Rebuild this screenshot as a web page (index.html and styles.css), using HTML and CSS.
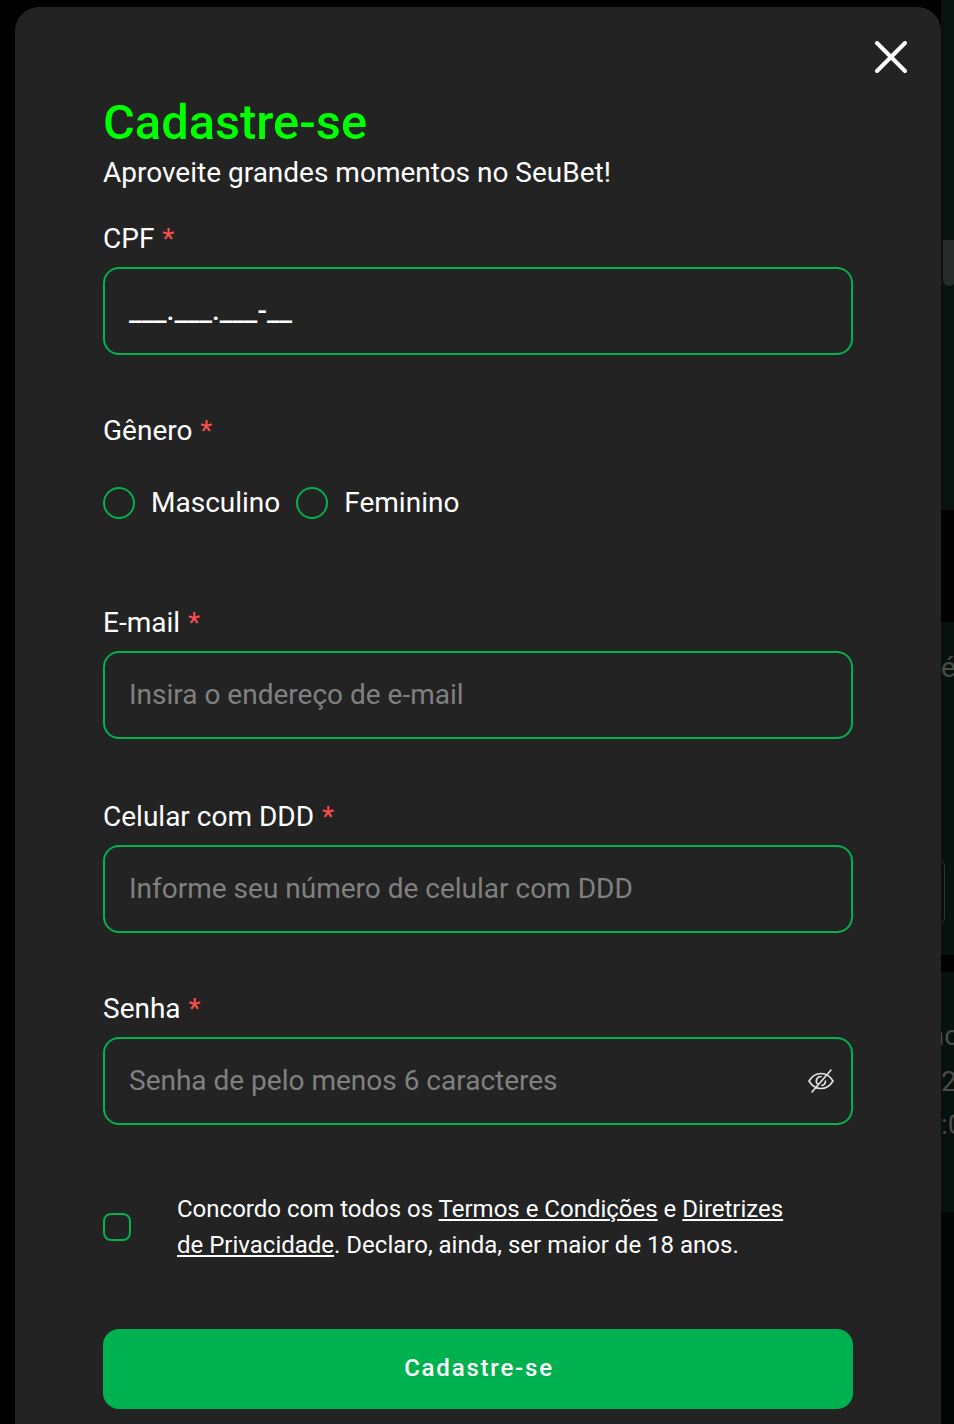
FILE: index.html
```html
<!DOCTYPE html>
<html lang="pt-BR">
  <head>
    <meta charset="UTF-8" />
    <meta name="viewport" content="width=device-width, initial-scale=1.0" />
    <title>Cadastre-se</title>
    <link rel="stylesheet" href="styles.css">
  </head>
  <body>
    <!-- Page behind the modal, only its right edge shows -->
    <div class="backdrop">
      <span class="bg-blob"></span>
      <span class="bg-text bg-text-1">é</span>
      <span class="bg-box"></span>
      <span class="bg-text bg-text-2">ác</span>
      <span class="bg-text bg-text-3">2</span>
      <span class="bg-text bg-text-4">:0</span>
    </div>

    <!-- Modal -->
    <div class="modal">
      <button class="close-btn" aria-label="Fechar">
        <svg width="32" height="32" viewBox="0 0 32 32">
          <path d="M2 2L30 30M30 2L2 30" stroke="#fff" stroke-width="4" stroke-linecap="round" fill="none" />
        </svg>
      </button>

      <h1 class="title">Cadastre-se</h1>
      <p class="subtitle">Aproveite grandes momentos no SeuBet!</p>

      <form class="form">
        <div class="field field-cpf">
          <label>CPF <span class="req">*</span></label>
          <div class="input-box"><span class="mask">___.___.___-__</span></div>
        </div>

        <div class="field field-gender">
          <label>Gênero <span class="req">*</span></label>
          <div class="radios">
            <div class="radio-item"><span class="radio"></span>Masculino</div>
            <div class="radio-item"><span class="radio"></span>Feminino</div>
          </div>
        </div>

        <div class="field field-email">
          <label>E-mail <span class="req">*</span></label>
          <div class="input-box"><span class="placeholder">Insira o endereço de e-mail</span></div>
        </div>

        <div class="field field-phone">
          <label>Celular com DDD <span class="req">*</span></label>
          <div class="input-box"><span class="placeholder">Informe seu número de celular com DDD</span></div>
        </div>

        <div class="field field-pass">
          <label>Senha <span class="req">*</span></label>
          <div class="input-box">
            <span class="placeholder">Senha de pelo menos 6 caracteres</span>
            <svg class="eye" width="28" height="28" viewBox="0 0 28 28" fill="none" stroke="#e6e6e6" stroke-width="1.6" stroke-linecap="round">
              <path d="M2 14C5 9 9 6.500 14 6.500C19 6.500 23 9 26 14C23 19 19 21.500 14 21.500C9 21.500 5 19 2 14Z" />
              <path d="M14 9.500A4.500 4.500 0 0 0 10.500 17" />
              <path d="M18.500 14A4.500 4.500 0 0 1 15 18.400" />
              <path d="M24 3L5 25" />
            </svg>
          </div>
        </div>

        <div class="terms">
          <span class="checkbox"></span>
          <p>Concordo com todos os <a href="#">Termos e Condições</a> e <a href="#">Diretrizes de Privacidade</a>. Declaro, ainda, ser maior de 18 anos.</p>
        </div>

        <button class="btn" type="button">Cadastre-se</button>
      </form>
    </div>
  </body>
</html>
```

FILE: styles.css
```css
html,
body {
  height: 1424px;
  overflow: hidden;
}

body {
  margin: 0;
  font-family: Roboto, Arial, sans-serif;
  color: #fff;
  background-color: #000;
}

/* Backdrop strip */
.backdrop {
  position: absolute;
  top: 0;
  left: 941px;
  width: 13px;
  height: 1424px;
  overflow: hidden;
  background: linear-gradient(
    180deg,
    #08120e 0,
    #08120e 510px,
    #000 510px,
    #000 622px,
    #07120e 622px,
    #07120e 955px,
    #000 955px,
    #000 972px,
    #07120e 972px,
    #07120e 1212px,
    #030504 1212px
  );
}

.bg-blob {
  position: absolute;
  top: 240px;
  left: 2px;
  width: 14px;
  height: 46px;
  background-color: #262b29;
  border-radius: 0 0 10px 8px;
}

.bg-box {
  position: absolute;
  top: 860px;
  left: -40px;
  width: 42px;
  height: 62px;
  border: 1px solid #2e3432;
  border-radius: 6px;
}

.bg-text {
  position: absolute;
  left: 0;
  color: #4a4a4a;
  font-size: 28px;
  line-height: 36px;
  white-space: nowrap;
}

.bg-text-1 {
  top: 650px;
}

.bg-text-2 {
  top: 1018px;
  left: -12px;
}

.bg-text-3 {
  top: 1064px;
}

.bg-text-4 {
  top: 1107px;
}

/* Modal */
.modal {
  position: relative;
  box-sizing: border-box;
  width: 926px;
  height: 1450px;
  margin: 7px 0 0 15px;
  padding: 88px 88px 0;
  background-color: #232323;
  border-radius: 24px;
}

.close-btn {
  position: absolute;
  top: 34px;
  right: 34px;
  padding: 0;
  display: flex;
  background: none;
  border: none;
  cursor: pointer;
}

.title {
  margin: 0;
  font-size: 48.800px;
  line-height: 56px;
  font-weight: 500;
  color: #00ff00;
}

.subtitle {
  margin: 2px 0 0;
  font-size: 28px;
  line-height: 40px;
}

/* Fields */
.field label {
  display: block;
  font-size: 28px;
  line-height: 36px;
  margin-bottom: 10px;
}

.req {
  color: #ff4d4f;
  margin-left: 1px;
}

.field-cpf {
  margin-top: 28px;
}

.field-gender {
  margin-top: 58px;
}

.field-email {
  margin-top: 84px;
}

.field-phone {
  margin-top: 60px;
}

.field-pass {
  margin-top: 58px;
}

.input-box {
  box-sizing: border-box;
  height: 88px;
  padding: 0 24px;
  display: flex;
  align-items: center;
  justify-content: space-between;
  border: 2px solid #00b14f;
  border-radius: 16px;
  font-size: 28px;
}

.placeholder {
  color: #808080;
  margin-top: -2px;
}

.mask {
  font-size: 28px;
  font-weight: 500;
  line-height: 36px;
}

.eye {
  margin-right: -8px;
}

/* Gender */
.radios {
  display: flex;
  gap: 16px;
  margin-top: 36px;
}

.radio-item {
  display: flex;
  align-items: center;
  gap: 16px;
  font-size: 28px;
  line-height: 36px;
}

.radio {
  box-sizing: border-box;
  width: 32px;
  height: 32px;
  border: 2px solid #00b14f;
  border-radius: 50%;
}

/* Terms */
.terms {
  display: flex;
  align-items: center;
  margin-top: 66px;
}

.checkbox {
  flex: none;
  box-sizing: border-box;
  width: 28px;
  height: 28px;
  margin-right: 46px;
  border: 2px solid #00b14f;
  border-radius: 8px;
}

.terms p {
  margin: 0;
  padding-right: 48px;
  font-size: 24px;
  line-height: 36px;
}

.terms a {
  color: #fff;
}

.btn {
  display: block;
  width: 100%;
  height: 80px;
  margin-top: 66px;
  padding: 0 0 2px 2px;
  background-color: #00b14f;
  color: #fff;
  border: none;
  border-radius: 16px;
  font-family: Roboto, Arial, sans-serif;
  font-size: 24px;
  font-weight: 500;
  letter-spacing: 1.800px;
  cursor: pointer;
}
```
